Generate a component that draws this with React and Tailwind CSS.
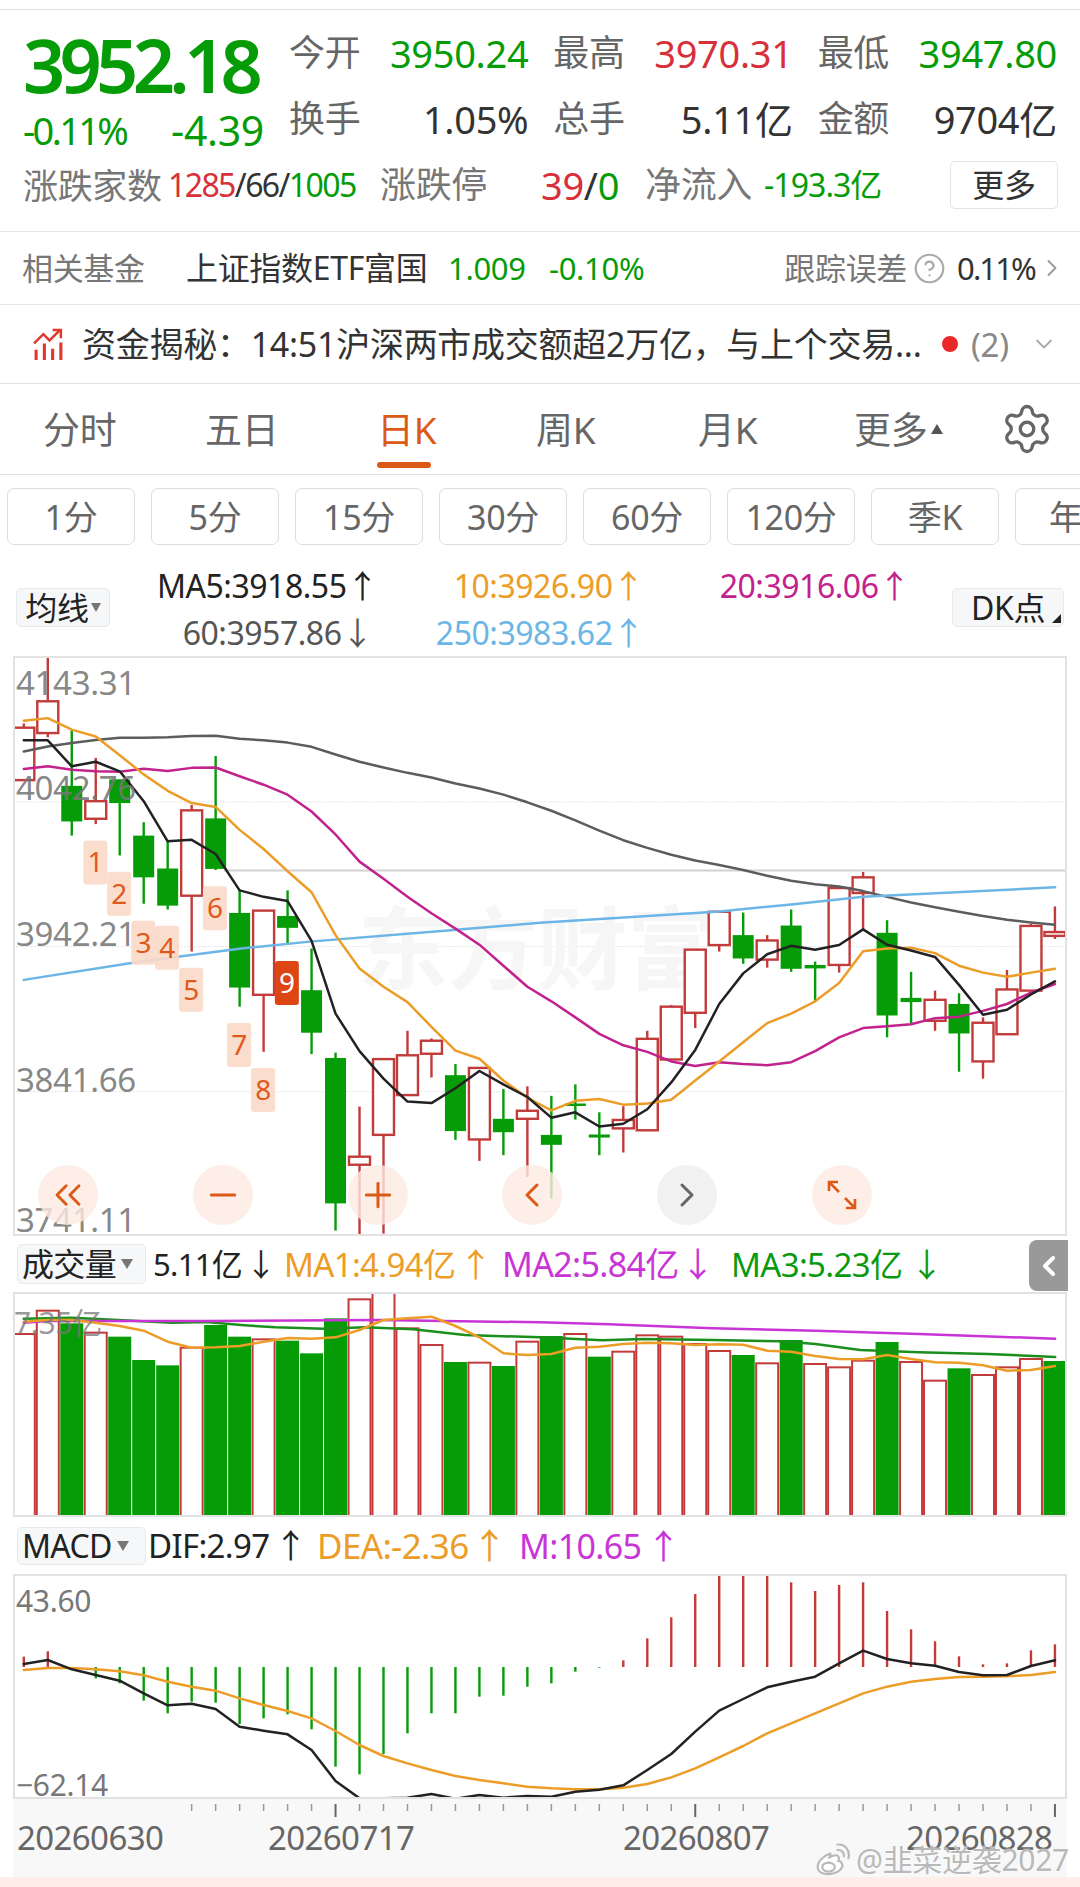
import { Settings, ChevronRight, ChevronDown, ChevronLeft, ChevronsLeft, Minus, Plus, CircleHelp } from "lucide-react"

const GREEN = "#069c08"
const RED = "#c23b3b"
const ORANGE = "#ec9d28"

// sample units come from zoomed crops, these convert them back to page pixels
const cx = (i) => 23.8 + 23.98 * i
const ky = (z) => 650 + z / 2.613
const vy = (z) => 1240 + z / 3
const my = (z) => 1530 + z / 3
const lx = (z) => z / 2.904
const rx = (z) => 540 + z / 2.904

// [type, high, top, bottom, low]
const candles = [
    ["r", 192, 203, 340, 340], ["r", 17, 134, 217, 228], ["g", 210, 355, 448, 485], ["r", 282, 395, 441, 455],
    ["g", 338, 338, 400, 537], ["g", 450, 485, 594, 663], ["g", 500, 571, 668, 678], ["r", 405, 419, 642, 788],
    ["g", 277, 440, 572, 575], ["g", 628, 687, 882, 932], ["r", 681, 681, 901, 1050], ["g", 628, 695, 726, 770],
    ["g", 780, 889, 1000, 1056], ["g", 1052, 1066, 1446, 1517], ["r", 1193, 1324, 1345, 1532], ["r", 1069, 1069, 1267, 1525],
    ["r", 995, 1059, 1163, 1163], ["r", 1015, 1021, 1055, 1117], ["g", 1082, 1111, 1257, 1280], ["r", 1092, 1092, 1279, 1335],
    ["g", 1147, 1225, 1260, 1320], ["r", 1140, 1204, 1225, 1377], ["g", 1165, 1267, 1293, 1433], ["g", 1135, 1185, 1190, 1227],
    ["g", 1208, 1266, 1274, 1320], ["r", 1192, 1228, 1250, 1313], ["r", 995, 1016, 1255, 1255], ["r", 928, 932, 1070, 1070],
    ["r", 783, 783, 948, 988], ["r", 684, 684, 771, 788], ["g", 686, 745, 806, 820], ["r", 745, 759, 809, 830],
    ["g", 678, 720, 833, 841], ["g", 814, 823, 832, 920], ["r", 622, 622, 823, 843], ["r", 580, 594, 635, 730],
    ["g", 706, 739, 955, 1012], ["g", 841, 909, 920, 975], ["r", 890, 914, 969, 995], ["g", 897, 925, 1002, 1102],
    ["r", 960, 974, 1075, 1120], ["r", 836, 887, 1004, 1004], ["r", 716, 721, 890, 890], ["r", 670, 737, 747, 755],
]

const ma5 = [236, 236, 304, 292, 317, 395, 500, 496, 533, 628, 645, 656, 760, 950, 1048, 1120, 1180, 1184, 1145, 1100, 1135, 1168, 1222, 1208, 1245, 1238, 1200, 1130, 1045, 925, 845, 795, 773, 783, 771, 730, 770, 785, 802, 875, 953, 940, 900, 866]
const ma10 = [185, 178, 208, 226, 275, 325, 368, 400, 410, 470, 520, 578, 633, 745, 832, 880, 920, 985, 1047, 1068, 1125, 1170, 1203, 1178, 1173, 1188, 1185, 1175, 1125, 1075, 1025, 975, 950, 918, 870, 787, 780, 778, 792, 825, 843, 854, 843, 833]
const ma20 = [311, 304, 313, 317, 318, 310, 316, 308, 307, 330, 352, 378, 422, 482, 553, 598, 645, 688, 728, 770, 825, 880, 918, 960, 1003, 1033, 1050, 1075, 1087, 1077, 1082, 1085, 1077, 1048, 1012, 988, 983, 978, 962, 958, 943, 925, 895, 873]
const ma60 = [265, 252, 243, 235, 229, 229, 228, 225, 224, 232, 236, 242, 253, 273, 292, 307, 321, 333, 349, 362, 378, 398, 420, 445, 472, 497, 517, 535, 550, 562, 575, 590, 603, 612, 618, 630, 645, 660, 672, 684, 695, 705, 712, 718]
const ma250 = [[lx(69), 862], [lx(400), 815], [lx(700), 780], [lx(900), 762], [lx(1300), 733], [rx(0), 713], [rx(521), 683], [rx(730), 665], [rx(939), 645], [rx(1496), 620]]

const tags = [["1", 277, 555], ["2", 346, 637], ["3", 416, 765], ["4", 485, 778], ["5", 555, 888], ["6", 624, 675], ["7", 694, 1032], ["8", 764, 1150]]

// [red?, top]
const volumes = [
    [1, 282], [1, 212], [0, 250], [1, 278], [0, 290], [0, 360], [0, 376], [1, 323], [0, 255], [0, 290], [1, 298], [0, 302],
    [0, 340], [0, 235], [1, 178], [1, 157], [1, 265], [1, 315], [0, 366], [1, 368], [0, 378], [1, 305], [0, 288], [1, 282],
    [0, 350], [1, 335], [1, 286], [1, 290], [1, 312], [1, 333], [0, 345], [1, 370], [0, 300], [1, 372], [1, 382], [1, 362],
    [0, 306], [1, 366], [1, 422], [0, 385], [1, 405], [1, 382], [1, 357], [0, 363],
]
const volMa1 = [245, 240, 240, 248, 258, 272, 305, 323, 322, 318, 305, 294, 296, 292, 270, 240, 235, 230, 258, 292, 340, 345, 342, 323, 320, 312, 308, 310, 315, 313, 314, 332, 335, 348, 357, 358, 345, 357, 367, 368, 376, 392, 390, 378]
const volMa2 = [[lx(69), 248], [lx(138), 243], [lx(600), 243], [lx(1100), 240], [rx(0), 247], [rx(200), 253], [rx(500), 265], [rx(800), 272], [rx(1100), 282], [rx(1496), 296]]
const volMa3 = [[lx(69), 236], [lx(207), 233], [lx(300), 238], [lx(400), 243], [lx(500), 248], [lx(600), 246], [lx(700), 255], [lx(800), 262], [lx(940), 266], [lx(1060), 262], [lx(1200), 268], [lx(1350), 285], [rx(0), 292], [rx(180), 301], [rx(300), 297], [rx(500), 300], [rx(700), 304], [rx(800), 312], [rx(930), 330], [rx(1100), 337], [rx(1300), 342], [rx(1496), 351]]

const macdBars = [380, 364, 420, 445, 460, 512, 550, 515, 518, 582, 565, 553, 598, 710, 733, 672, 610, 550, 550, 500, 497, 470, 460, 425, 413, 391, 325, 262, 192, 132, 132, 132, 157, 183, 165, 157, 243, 298, 334, 379, 403, 400, 361, 343]
const dif = [402, 390, 418, 435, 452, 490, 526, 521, 537, 590, 602, 613, 660, 753, 805, 805, 803, 792, 806, 795, 803, 798, 800, 785, 779, 766, 720, 672, 605, 542, 507, 472, 455, 440, 400, 362, 387, 400, 407, 426, 436, 435, 408, 391]
const dea = [420, 414, 414, 418, 424, 436, 455, 470, 482, 505, 525, 543, 565, 603, 645, 678, 700, 720, 738, 750, 760, 770, 775, 778, 778, 773, 762, 742, 715, 682, 648, 610, 580, 550, 520, 490, 470, 455, 447, 441, 440, 439, 435, 426]

const intervals = ["1分", "5分", "15分", "30分", "60分", "120分", "季K"]
const tabs = [["分时", "w-[162px]"], ["五日", "w-[172px]"], ["日K", "w-[159px]"], ["周K", "w-[162px]"], ["月K", "w-[156px]"]]

function toLine(ys, yFn) {
    return ys.map((y, i) => `${cx(i)},${yFn(y)}`).join(" ")
}

function toPoints(points, yFn) {
    return points.map(([x, y]) => `${x},${yFn(y)}`).join(" ")
}

function Line({ points, color, width = 2.5 }) {
    return <polyline points={points} fill="none" stroke={color} strokeWidth={width} strokeLinejoin="round" strokeLinecap="round" />
}

function Candle({ candle, index }) {
    const [type, high, top, bottom, low] = candle
    const x = cx(index)
    if (type === "g") {
        return (
            <g>
                <line x1={x} x2={x} y1={ky(high)} y2={ky(low)} stroke={GREEN} strokeWidth="2.4" />
                <rect x={x - 10.5} y={ky(top)} width="21" height={Math.max(ky(bottom) - ky(top), 2.5)} fill={GREEN} />
            </g>
        )
    }
    return (
        <g>
            <line x1={x} x2={x} y1={ky(high)} y2={ky(top)} stroke={RED} strokeWidth="2.4" />
            <line x1={x} x2={x} y1={ky(bottom)} y2={ky(low)} stroke={RED} strokeWidth="2.4" />
            <rect x={x - 10.5} y={ky(top)} width="21" height={ky(bottom) - ky(top)} fill="#fff" stroke={RED} strokeWidth="2.4" />
        </g>
    )
}

function CandleChart() {
    return (
        <svg viewBox="13 656 1054 580" className="block w-[1054px] h-[580px]">
            {[397, 775, 1154].map((z) => (
                <line key={z} x1="13" x2="1067" y1={ky(z)} y2={ky(z)} stroke="#dedede" strokeWidth="1" strokeDasharray="1.5 1.5" />
            ))}
            <line x1={lx(650)} x2="1067" y1={ky(576)} y2={ky(576)} stroke="#d2d2d2" strokeWidth="2" />
            <text x="358" y="982" fontSize="90" fontWeight="700" fill="#f6f6f6">东方财富</text>
            {candles.map((c, i) => <Candle key={i} candle={c} index={i} />)}
            <Line points={toLine(ma60, ky)} color="#5c5c5c" />
            <Line points={toPoints(ma250, ky)} color="#6cb6e6" />
            <Line points={toLine(ma20, ky)} color="#c2228c" />
            <Line points={toLine(ma10, ky)} color={ORANGE} />
            <Line points={toLine(ma5, ky)} color="#222" />
            {[["4143.31", 695], ["4042.76", 800], ["3942.21", 946], ["3841.66", 1092], ["3741.11", 1232]].map(([t, y]) => (
                <text key={t} x="16" y={y} fontSize="33" fill="#777" fillOpacity="0.9">{t}</text>
            ))}
            {tags.map(([t, x, y]) => (
                <g key={t}>
                    <rect x={lx(x) - 12} y={ky(y) - 22} width="24" height="44" rx="3" fill="#fbd9c8" fillOpacity="0.9" />
                    <text x={lx(x)} y={ky(y) + 10} fontSize="28" textAnchor="middle" fill="#e0591c">{t}</text>
                </g>
            ))}
            <rect x={lx(833) - 12} y={ky(870) - 22} width="24" height="44" rx="3" fill="#dd4513" />
            <text x={lx(833)} y={ky(870) + 10} fontSize="28" textAnchor="middle" fill="#fff">9</text>
        </svg>
    )
}

function NavCircle({ children, gray, className }) {
    return (
        <div className={`absolute top-[509px] w-[60px] h-[60px] rounded-full flex items-center justify-center ${gray ? "bg-[#f0f0f0]/90 text-[#666]" : "bg-[#fdebe2]/80 text-[#dc5a18]"} ${className}`}>
            {children}
        </div>
    )
}

function VolumeChart() {
    return (
        <svg viewBox="13 1292 1054 225" className="block w-[1054px] h-[225px]">
            {volumes.map(([red, top], i) => {
                const left = i === 0 ? 13 : cx(i) - 12
                const w = i === 0 ? cx(0) + 12 - 13 : 24
                return red ? (
                    <rect key={i} x={left + 1} y={vy(top)} width={w - 2} height={1517 - vy(top) - 1} fill="#fff" stroke={RED} strokeWidth="2" />
                ) : (
                    <rect key={i} x={left + 0.5} y={vy(top)} width={w - 1} height={1517 - vy(top)} fill={GREEN} />
                )
            })}
            <Line points={toPoints(volMa3, vy)} color="#1a8f1c" />
            <Line points={toPoints(volMa2, vy)} color="#c934d6" />
            <Line points={toLine(volMa1, vy)} color={ORANGE} />
            <text x="14" y="1334" fontSize="30" fill="#777" fillOpacity="0.75">7.35亿</text>
        </svg>
    )
}

function MacdChart() {
    return (
        <svg viewBox="13 1574 1054 225" className="block w-[1054px] h-[225px]">
            {macdBars.map((z, i) => (
                <line key={i} x1={cx(i)} x2={cx(i)} y1={my(411)} y2={my(z)} stroke={z < 411 ? RED : GREEN} strokeWidth="2.4" />
            ))}
            <Line points={toLine(dea, my)} color={ORANGE} />
            <Line points={toLine(dif, my)} color="#222" />
            <text x="16" y="1612" fontSize="30" fill="#777">43.60</text>
            <text x="16" y="1796" fontSize="30" fill="#777">−62.14</text>
        </svg>
    )
}

function AxisFooter() {
    const ticks = candles.map((_, i) => i).filter((i) => i >= 7)
    return (
        <svg viewBox="13 1799 1054 78" className="block w-[1054px] h-[78px]">
            {ticks.map((i) => {
                const major = i === 13 || i === 28 || i === 43
                return <line key={i} x1={cx(i)} x2={cx(i)} y1="1804" y2={major ? 1817 : 1811} stroke={major ? "#666" : "#999"} strokeWidth={major ? 2 : 1.5} />
            })}
            {[["20260630", 17], ["20260717", 268], ["20260807", 623], ["20260828", 906]].map(([t, x]) => (
                <text key={t} x={x} y="1850" fontSize="33" letterSpacing="-0.6" fill="#666">{t}</text>
            ))}
        </svg>
    )
}

function SelectButton({ children, className }) {
    return (
        <div className={`flex items-center justify-center rounded-[5px] border border-[#e6e8ea] bg-[#f6f7f8] text-[32px] leading-none text-[#222] ${className}`}>
            {children}
        </div>
    )
}

function Caret() {
    return <span className="ml-[5px] w-0 h-0 border-x-[6px] border-x-transparent border-t-[10px] border-t-[#777]" />
}

function Stat({ label, value, color }) {
    return (
        <div className="flex items-center justify-between">
            <span className="text-[36px] text-[#666]">{label}</span>
            <span className={`text-[38px] ${color}`}>{value}</span>
        </div>
    )
}

export default function App() {
    return (
        <div className="w-[1080px] h-[1887px] overflow-hidden bg-white font-['Noto_Sans','Noto_Sans_CJK_SC',sans-serif] leading-none tracking-[-0.02em]">
            <div className="h-[10px] border-b border-[#dedede]" />

            {/* quote header */}
            <div className="h-[222px] border-b border-[#e6e6e6]">
                <div className="flex h-[155px]">
                    <div className="w-[289px] pl-[23px] pt-[20px]">
                        <div className="text-[74px] font-semibold text-[#069c08] tracking-[-0.078em] leading-[70px]">3952.18</div>
                        <div className="flex w-[241px] justify-between items-center mt-[11px] text-[38px] text-[#069c08] leading-[38px]">
                            <span className="tracking-[-0.07em]">-0.11%</span>
                            <span className="text-[41px]">-4.39</span>
                        </div>
                    </div>
                    <div className="grid grid-cols-3 gap-x-[25px] w-[768px] grid-rows-[66px_66px] pt-[10px]">
                        <Stat label="今开" value="3950.24" color="text-[#069c08]" />
                        <Stat label="最高" value="3970.31" color="text-[#d8303a]" />
                        <Stat label="最低" value="3947.80" color="text-[#069c08]" />
                        <Stat label="换手" value="1.05%" color="text-[#333]" />
                        <Stat label="总手" value="5.11亿" color="text-[#333]" />
                        <Stat label="金额" value="9704亿" color="text-[#333]" />
                    </div>
                </div>
                <div className="flex items-center pl-[23px] pr-[22px] h-[48px] -mt-[4px]">
                    <span className="text-[35px] text-[#777] w-[145px]">涨跌家数</span>
                    <span className="text-[32px] w-[212px] tracking-[-0.05em]">
                        <span className="text-[#d8303a]">1285</span>
                        <span className="text-[#333]">/66/</span>
                        <span className="text-[#069c08]">1005</span>
                    </span>
                    <span className="text-[36px] text-[#777] w-[161px]">涨跌停</span>
                    <span className="text-[38px] w-[104px]">
                        <span className="text-[#d8303a]">39</span>
                        <span className="text-[#333]">/</span>
                        <span className="text-[#069c08]">0</span>
                    </span>
                    <span className="text-[36px] text-[#777] w-[119px]">净流入</span>
                    <span className="text-[32px] text-[#069c08] tracking-[-0.03em]">-193.3亿</span>
                    <div className="ml-auto w-[108px] h-[48px] flex items-center justify-center border border-[#e4e4e4] rounded-[5px] text-[32px] text-[#333]">更多</div>
                </div>
            </div>

            {/* related fund */}
            <div className="h-[73px] border-b border-[#e6e6e6] flex items-center pl-[22px] pr-[18px]">
                <span className="w-[164px] text-[31px] text-[#777]">相关基金</span>
                <span className="w-[262px] text-[32px] text-[#333] whitespace-nowrap">上证指数ETF富国</span>
                <span className="w-[101px] text-[31px] text-[#069c08]">1.009</span>
                <span className="text-[31px] text-[#069c08]">-0.10%</span>
                <span className="ml-auto text-[31px] text-[#777]">跟踪误差</span>
                <CircleHelp size={33} strokeWidth={1.6} className="ml-[6px] text-[#aaa]" />
                <span className="ml-[11px] text-[31px] text-[#333] tracking-[-0.06em]">0.11%</span>
                <ChevronRight size={28} strokeWidth={1.6} className="text-[#999] ml-[3px] -mr-[4px]" />
            </div>

            {/* news ticker */}
            <div className="h-[79px] border-b border-[#e0e0e0] flex items-center pl-[32px] pr-[22px] text-[34px] text-[#333]">
                <svg viewBox="0 0 32 32" className="w-[33px] h-[33px]" fill="none" stroke="#e0382c" strokeWidth="3">
                    <path d="M2 15 L11 6 L17 12 L27 2" strokeWidth="2.4" />
                    <path d="M20 2 H28 V10" strokeWidth="2.4" />
                    <path d="M4 21 V31 M12 15 V31 M20 20 V31 M28 14 V31" />
                </svg>
                <span className="ml-[17px] w-[852px] whitespace-nowrap tracking-[-0.008em]">资金揭秘：14:51沪深两市成交额超2万亿，与上个交易...</span>
                <span className="ml-[8px] w-[16px] h-[16px] rounded-full bg-[#ea2a2a]" />
                <span className="ml-[13px] text-[33px] text-[#888]">(2)</span>
                <ChevronDown size={28} strokeWidth={1.6} className="ml-auto text-[#aaa]" />
            </div>

            {/* period tabs */}
            <div className="h-[91px] border-b border-[#e0e0e0] flex items-center pl-[43px] text-[37px] text-[#666]">
                {tabs.map(([name, width], i) => (
                    <div key={name} className={`relative ${width} ${i === 2 ? "text-[#dc5a18]" : ""}`}>
                        {name}
                        {i === 2 && <div className="absolute left-0 top-[51px] w-[54px] h-[6px] rounded-full bg-[#dc5a18]" />}
                    </div>
                ))}
                <div className="flex items-center">
                    更多
                    <span className="ml-[4px] w-0 h-0 border-x-[6px] border-x-transparent border-b-[10px] border-b-[#555]" />
                </div>
                <Settings size={54} strokeWidth={1.5} className="ml-auto mr-[26px] text-[#666]" />
            </div>

            {/* interval buttons */}
            <div className="h-[70px] pt-[13px] pl-[7px] flex gap-[16px] overflow-hidden">
                {intervals.map((name) => (
                    <div key={name} className="shrink-0 w-[128px] h-[57px] flex items-center justify-center border border-[#dddddd] rounded-[7px] text-[34px] text-[#666]">
                        {name}
                    </div>
                ))}
                <div className="shrink-0 w-[128px] h-[57px] flex items-center pl-[33px] border border-[#dddddd] rounded-[7px] text-[34px] text-[#666]">年K</div>
            </div>

            {/* moving averages */}
            <div className="h-[111px] flex pl-[16px] pr-[16px]">
                <SelectButton className="w-[94px] h-[39px] mt-[43px] self-start">
                    均线<span className="ml-[2px] w-0 h-0 border-x-[5px] border-x-transparent border-t-[9px] border-t-[#777]" />
                </SelectButton>
                <div className="ml-[47px] pt-[17px] grid grid-cols-[216px_271px_266px] grid-rows-[47px_47px] items-center text-right text-[32px] tracking-[-0.015em]">
                    <span className="text-[#222]">MA5:3918.55↑</span>
                    <span className="text-[#ec9d28]">10:3926.90↑</span>
                    <span className="text-[#c2228c]">20:3916.06↑</span>
                    <span className="text-[#555]">60:3957.86↓</span>
                    <span className="text-[#6cb6e6]">250:3983.62↑</span>
                </div>
                <SelectButton className="relative ml-auto w-[112px] h-[39px] mt-[43px] self-start">
                    DK点
                    <span className="absolute right-[2px] bottom-[3px] w-0 h-0 border-l-[9px] border-l-transparent border-b-[9px] border-b-[#222]" />
                </SelectButton>
            </div>

            {/* candle panel */}
            <div className="relative ml-[13px] w-[1054px] h-[580px] outline-2 -outline-offset-2 outline-[#e2e2e2]">
                <CandleChart />
                <NavCircle className="left-[25px]"><ChevronsLeft size={44} strokeWidth={1.6} /></NavCircle>
                <NavCircle className="left-[180px]"><Minus size={40} strokeWidth={1.8} /></NavCircle>
                <NavCircle className="left-[335px]"><Plus size={40} strokeWidth={1.8} /></NavCircle>
                <NavCircle className="left-[489px]"><ChevronLeft size={40} strokeWidth={1.8} /></NavCircle>
                <NavCircle gray className="left-[644px]"><ChevronRight size={40} strokeWidth={1.8} /></NavCircle>
                <NavCircle className="left-[799px]">
                    <svg viewBox="0 0 32 32" className="w-[32px] h-[32px]" fill="none" stroke="currentColor" strokeWidth="2.6">
                        <path d="M3 12 V3 H12 M3 3 L13 13 M29 20 V29 H20 M29 29 L19 19" />
                    </svg>
                </NavCircle>
            </div>

            {/* volume legend */}
            <div className="relative h-[56px] flex items-center pl-[17px] text-[33px] tracking-[-0.02em] whitespace-nowrap">
                <SelectButton className="w-[129px] h-[40px] pl-[4px] justify-start">
                    成交量<Caret />
                </SelectButton>
                <span className="ml-[7px] w-[131px] text-[31px] text-[#222] [word-spacing:-4px]">5.11亿 ↓</span>
                <span className="w-[218px] text-[#ec9d28] [word-spacing:-4px]">MA1:4.94亿 ↑</span>
                <span className="w-[229px] text-[34px] text-[#c934d6] [word-spacing:-6px]">MA2:5.84亿 ↓</span>
                <span className="text-[#0a9a10]">MA3:5.23亿 ↓</span>
                <div className="absolute right-[12px] top-[4px] w-[39px] h-[51px] rounded-l-[8px] bg-[#999999] flex items-center justify-center text-white">
                    <ChevronLeft size={32} strokeWidth={3} />
                </div>
            </div>

            <div className="ml-[13px] w-[1054px] h-[225px] outline-2 -outline-offset-2 outline-[#e2e2e2]">
                <VolumeChart />
            </div>

            {/* macd legend */}
            <div className="h-[57px] flex items-center pl-[17px] text-[33px] tracking-[-0.02em] whitespace-nowrap">
                <SelectButton className="w-[129px] h-[38px] pl-[4px] justify-start">
                    MACD<Caret />
                </SelectButton>
                <span className="ml-[2px] w-[169px] text-[#222] [word-spacing:-3px]">DIF:2.97 ↑</span>
                <span className="w-[202px] text-[35px] text-[#ec9d28] [word-spacing:-5px]">DEA:-2.36 ↑</span>
                <span className="text-[34px] text-[#c934d6] [word-spacing:-3px]">M:10.65 ↑</span>
            </div>

            <div className="ml-[13px] w-[1054px] h-[225px] outline-2 -outline-offset-2 outline-[#e2e2e2]">
                <MacdChart />
            </div>

            <div className="relative ml-[13px] w-[1054px] h-[78px] bg-[#f8f8f9]">
                <AxisFooter />
                <div className="absolute left-[802px] top-[44px] flex items-center whitespace-nowrap text-[30px] text-[#b9b9b9] tracking-[-0.01em] [text-shadow:0_0_2px_#fff]">
                    <svg viewBox="0 0 40 38" className="w-[36px] h-[34px] mr-[5px]" fill="none" stroke="#b9b9b9" strokeWidth="2.4">
                        <path d="M16 12 C8 15 2 22 3 28 C4 34 13 36 20 34 C28 32 32 27 30 23 C29 21 27 20 26 20 C28 15 25 13 21 14 L16 16 C17 13 18 11 16 12 Z" fill="#fff" />
                        <ellipse cx="15" cy="27" rx="7" ry="5" />
                        <path d="M24 8 C30 7 33 11 32 16 M24 2 C33 0 40 8 37 18" />
                    </svg>
                    @韭菜逆袭2027
                </div>
            </div>
            <div className="h-[10px] bg-[#fdeee8]" />
        </div>
    )
}
